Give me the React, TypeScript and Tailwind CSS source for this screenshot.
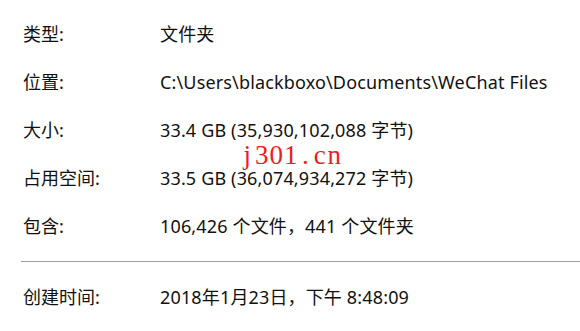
const rows: [string, string][] = [
  ['类型:', '文件夹'],
  ['位置:', 'C:\\Users\\blackboxo\\Documents\\WeChat Files'],
  ['大小:', '33.4 GB (35,930,102,088 字节)'],
  ['占用空间:', '33.5 GB (36,074,934,272 字节)'],
  ['包含:', '106,426 个文件，441 个文件夹'],
]

function Row({ label, value }: { label: string; value: string }) {
  return (
    <div className="flex h-[48px] items-center">
      <div className="w-[137px] shrink-0">{label}</div>
      <div className="whitespace-nowrap tracking-[0.15px]">{value}</div>
    </div>
  )
}

export default function App() {
  return (
    <div
      className="relative h-[331px] w-[580px] overflow-hidden bg-white pl-[23px] pt-[10px] text-[18px] text-[#111]"
      style={{ fontFamily: '"Noto Sans", "Noto Sans CJK SC", sans-serif' }}
    >
      {rows.map(([l, v]) => (
        <Row key={l} label={l} value={v} />
      ))}
      <div className="my-[11px] -ml-[2px] h-px bg-[#a0a0a0]" />
      <Row label="创建时间:" value="2018年1月23日，下午 8:48:09" />

      {/* watermark */}
      <div
        className="absolute left-[240px] top-[142px] flex text-[27px] leading-none text-[#ee1c1c]"
        style={{ fontFamily: '"Liberation Serif", serif' }}
      >
        {'j301.cn'.split('').map((c, i) => (
          <span key={i} className="w-[14.5px] text-center">
            {c}
          </span>
        ))}
      </div>
    </div>
  )
}
